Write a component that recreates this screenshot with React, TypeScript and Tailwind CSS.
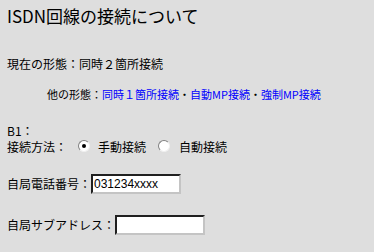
import React from 'react';

const Radio = ({ checked }: { checked?: boolean }) => (
  <span className="relative inline-block w-[12px] h-[12px] rounded-full bg-white border border-t-[#808080] border-l-[#808080] border-r-[#f0f0f0] border-b-[#f0f0f0] shrink-0">
    {checked && <span className="absolute left-[3px] top-[3px] w-[4px] h-[4px] rounded-full bg-black" />}
  </span>
);

const Field = ({ value }: { value?: string }) => (
  <div className="w-[90px] h-[20px] bg-white border-2 border-t-[#202020] border-l-[#202020] border-r-[#c4c4c4] border-b-[#c4c4c4] font-['Liberation_Sans',sans-serif] text-[12px] leading-[16px] pl-[1px]">
    {value}
  </div>
);

export default function App() {
  return (
    <div className="w-[374px] h-[252px] overflow-hidden bg-[#dedede] text-black pl-[7px] font-['Noto_Sans_CJK_JP',sans-serif]">
      <h1 className="pt-[6px] text-[17px] leading-[20px]">ISDN回線の接続について</h1>

      <p className="mt-[30px] text-[12px] leading-[16px]">現在の形態：同時２箇所接続</p>

      <p className="mt-[15px] ml-[40px] text-[11px] leading-[15px]">
        他の形態：
        <span className="text-[#0000ff]">同時１箇所接続</span>・
        <span className="text-[#0000ff]">自動MP接続</span>・
        <span className="text-[#0000ff]">強制MP接続</span>
      </p>

      <p className="mt-[21px] text-[12px] leading-[16px]">B1：</p>

      <div className="flex items-center h-[16px] text-[12px] leading-[16px]">
        <span>接続方法：</span>
        <span className="ml-[11px]"><Radio checked /></span>
        <span className="ml-[8px]">手動接続</span>
        <span className="ml-[12px]"><Radio /></span>
        <span className="ml-[9px]">自動接続</span>
      </div>

      <div className="mt-[19px] flex items-center text-[12px] leading-[16px]">
        <span>自局電話番号：</span>
        <Field value="031234xxxx" />
      </div>

      <div className="mt-[21px] flex items-center text-[12px] leading-[16px]">
        <span>自局サブアドレス：</span>
        <Field />
      </div>
    </div>
  );
}
